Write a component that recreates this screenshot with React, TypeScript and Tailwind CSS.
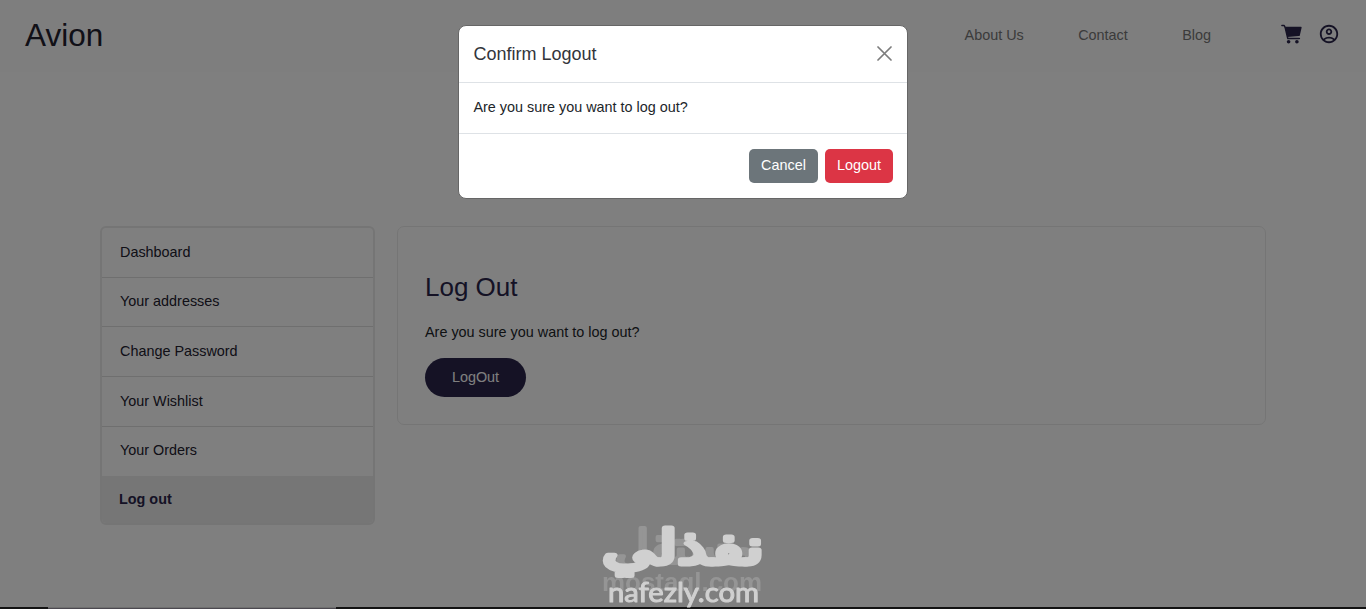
import { MdOutlineAccountCircle } from "react-icons/md";

const navLinks = ["About Us", "Contact", "Blog"];

const menuItems = [
  { label: "Dashboard", height: "h-[50px]" },
  { label: "Your addresses", height: "h-[49px]" },
  { label: "Change Password", height: "h-[50px]" },
  { label: "Your Wishlist", height: "h-[50px]" },
  { label: "Your Orders", height: "h-[49px] pb-[2px]" },
];

function CartIcon() {
  return (
    <svg className="h-[20px] w-[21px]" viewBox="0 0 21 20" fill="currentColor">
      <path
        d="M.9 1.5h2.3l1 2.2 2.6 10.9h11.6"
        fill="none"
        stroke="currentColor"
        strokeWidth="1.5"
        strokeLinecap="round"
        strokeLinejoin="round"
      />
      <path d="M4 2.8h15.9a.7.7 0 0 1 .7.9l-1.8 7.7a1 1 0 0 1-.9.7L6.4 12.9z" />
      <circle cx="7.6" cy="17.7" r="1.8" />
      <circle cx="15.9" cy="17.7" r="1.8" />
    </svg>
  );
}

function Watermark() {
  return (
    <svg
      className="pointer-events-none fixed bottom-0 left-[590px] z-30 h-[94px] w-[190px] overflow-visible"
      viewBox="0 0 190 94"
      fontFamily="'DejaVu Sans', sans-serif"
      strokeLinejoin="round"
    >
      <g fill="#9b9b9b" stroke="#9b9b9b" opacity="0.8">
        <text x="95" y="48" fontSize="46" textAnchor="middle" textLength="140" lengthAdjust="spacingAndGlyphs" direction="rtl" strokeWidth="4">
          مستقل
        </text>
        <text x="12" y="76" fontSize="25" fontWeight="700" textLength="160" lengthAdjust="spacingAndGlyphs" fontFamily="'Liberation Sans', sans-serif" strokeWidth="0">
          mostaql.com
        </text>
      </g>
      <g fill="#d0d0d0" stroke="#d0d0d0">
        <text x="93" y="48.5" fontSize="48" textAnchor="middle" textLength="162" lengthAdjust="spacingAndGlyphs" direction="rtl" strokeWidth="5">
          نفذلي
        </text>
        <text x="18" y="86.5" fontSize="26" textLength="151" lengthAdjust="spacingAndGlyphs" fontFamily="Lato, sans-serif" strokeWidth="1">
          nafezly.com
        </text>
      </g>
    </svg>
  );
}

export default function App() {
  return (
    <div className="h-[609px] overflow-hidden bg-white font-['Liberation_Sans',Arial,sans-serif] text-[14.4px] text-[#212529]">
      {/* navbar */}
      <header className="flex h-[72px] items-center bg-[#fcfcfc] pr-[26px] pl-[25px]">
        <a className="text-[31.5px] leading-none text-[#22202e]">Avion</a>
        <nav className="mb-[1px] ml-auto flex gap-[54.4px] text-[#777]">
          {navLinks.map((link) => (
            <a key={link}>{link}</a>
          ))}
        </nav>
        <div className="mb-[4px] ml-[70px] flex items-center gap-[16px] text-[#2a254b]">
          <CartIcon />
          <MdOutlineAccountCircle size={22} />
        </div>
      </header>

      {/* account */}
      <main className="flex items-start gap-[22px] pt-[154px] pr-[100px] pl-[100px]">
        <aside className="w-[275px] shrink-0 overflow-hidden rounded-[6px] border-2 border-[#eaeaea]">
          {menuItems.map((item, i) => (
            <a
              key={item.label}
              className={`flex items-center pl-[18px] text-[#22202e] ${item.height} ${
                i < menuItems.length - 1 ? "border-b border-[#dedede]" : ""
              }`}
            >
              {item.label}
            </a>
          ))}
          <a className="flex h-[47px] items-center bg-[#ededed] pl-[17px] font-bold text-[#2a254b]">
            Log out
          </a>
        </aside>

        <section className="h-[199px] flex-1 rounded-[7px] border border-[#ebebeb] pt-[43px] pl-[27px]">
          <h2 className="text-[26px] leading-[34px] text-[#2a254b]">Log Out</h2>
          <p className="mt-[17px] leading-[22px]">Are you sure you want to log out?</p>
          <button className="mt-[15px] h-[39px] w-[101px] rounded-full bg-[#2a254b] text-white">
            LogOut
          </button>
        </section>
      </main>

      {/* confirm modal */}
      <div className="fixed inset-0 z-10 bg-black/50" />
      <div className="fixed inset-x-0 top-[25px] z-20 mx-auto w-[450px] rounded-[8px] border border-[#666] bg-white">
        <div className="flex h-[57px] items-center justify-between border-b border-[#dee2e6] pr-[15px] pl-[14.4px]">
          <h5 className="text-[18px] text-[#33353b]">Confirm Logout</h5>
          <button aria-label="Close" className="mb-[1px]">
            <svg className="h-[15px] w-[15px]" viewBox="0 0 15 15" fill="none" stroke="#7c7c7c" strokeWidth="1.7" strokeLinecap="round">
              <path d="M1 1l13 13M14 1L1 14" />
            </svg>
          </button>
        </div>
        <div className="flex h-[51px] items-center border-b border-[#dee2e6] pl-[14.4px]">
          Are you sure you want to log out?
        </div>
        <div className="flex h-[64px] items-center justify-end gap-[7px] pr-[14px] text-white">
          <button className="h-[34px] w-[69px] rounded-[5px] bg-[#6c757a]">Cancel</button>
          <button className="h-[34px] w-[68px] rounded-[5px] bg-[#dc3545]">Logout</button>
        </div>
      </div>

      {/* bottom strip */}
      <div className="fixed inset-x-0 bottom-0 z-20 flex h-[2px] bg-[#131313]">
        <div className="ml-[48px] w-[288px] border-t border-[#6f6f6f] bg-[#4c4950]" />
      </div>
      <Watermark />
    </div>
  );
}
